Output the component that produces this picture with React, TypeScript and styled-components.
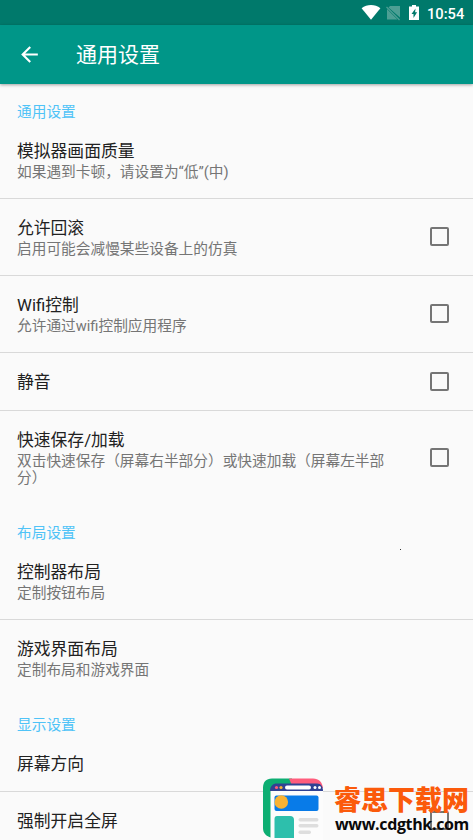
import React from 'react';
import styled, { createGlobalStyle } from 'styled-components';

const GlobalStyle = createGlobalStyle`
  html, body { margin: 0; padding: 0; background: #fafafa; }
  body { overflow: hidden; }
  * { box-sizing: border-box; }
`;

const Screen = styled.div`
  position: relative;
  width: 473px;
  height: 840px;
  overflow: hidden;
  background: #fafafa;
  font-family: Roboto, 'Noto Sans CJK SC', sans-serif;
`;

const StatusBar = styled.div`
  display: flex;
  align-items: center;
  justify-content: flex-end;
  height: 25px;
  padding-right: 9px;
  background: #00796b;
`;

const StatusIcons = styled.svg`
  display: block;
  width: 66px;
  height: 25px;
`;

const Clock = styled.span`
  width: 37px;
  color: #fff;
  font-size: 14.7px;
  font-weight: 500;
  line-height: 25px;
  white-space: nowrap;
  margin-top: 3px;
`;

const AppBar = styled.header`
  display: flex;
  align-items: center;
  height: 59px;
  padding-left: 17px;
  background: #009688;
  box-shadow: 0 1px 3px rgba(0, 0, 0, 0.36);
`;

const BackIcon = styled.svg`
  width: 25px;
  height: 25px;
`;

const Title = styled.h1`
  margin: 1px 0 0 34px;
  color: #fff;
  font-size: 21px;
  font-weight: 400;
  line-height: 30px;
`;

const Category = styled.h2`
  margin: 0;
  height: 38px;
  padding: 18px 17px 0;
  color: #4fc3f7;
  font-size: 14.7px;
  font-weight: 400;
  line-height: 20px;
`;

const Row = styled.div<{ $height: number; $divided: boolean }>`
  display: flex;
  align-items: center;
  height: ${p => p.$height}px;
  padding: 0 24px 0 17px;
  border-bottom: 1px solid ${p => (p.$divided ? '#d9d9d9' : 'transparent')};
`;

const RowText = styled.div`
  flex: 1;
  padding-right: 27px;
`;

const Label = styled.div`
  color: #212121;
  font-size: 16.8px;
  line-height: 22px;

  &:only-child {
    padding-top: 1px;
  }
`;

const Summary = styled.div`
  color: #757575;
  font-size: 14.7px;
  line-height: 17px;
  padding-top: 2px;
`;

const Checkbox = styled.span`
  flex: none;
  width: 19px;
  height: 19px;
  margin-bottom: 1px;
  border: 2px solid #757575;
  border-radius: 2px;
`;

const Speck = styled.span`
  position: absolute;
  left: 400px;
  top: 549px;
  width: 1px;
  height: 1px;
  background: #333;
`;

const Watermark = styled.div`
  position: absolute;
  left: 262px;
  top: 777px;
  display: flex;
`;

const Logo = styled.svg`
  width: 62px;
  height: 63px;
`;

const Brand = styled.div`
  margin-left: 10px;
  white-space: nowrap;
`;

const BrandName = styled.div`
  color: #fb5a0b;
  font: 900 27px/34px 'Noto Sans CJK SC', sans-serif;
  padding-top: 5px;
`;

const BrandUrl = styled.div`
  color: #0a0a0a;
  font: 700 16px/17px 'Open Sans', sans-serif;
  letter-spacing: -0.35px;
  padding-left: 1px;
`;

type Item = { label: string; summary?: string; check?: boolean; height: number };
type Section = { name: string; items: Item[] };

const sections: Section[] = [
  {
    name: '通用设置',
    items: [
      { label: '模拟器画面质量', summary: '如果遇到卡顿，请设置为“低”(中)', height: 77 },
      { label: '允许回滚', summary: '启用可能会减慢某些设备上的仿真', check: true, height: 77 },
      { label: 'Wifi控制', summary: '允许通过wifi控制应用程序', check: true, height: 77 },
      { label: '静音', check: true, height: 58 },
      {
        label: '快速保存/加载',
        summary: '双击快速保存（屏幕右半部分）或快速加载（屏幕左半部分）',
        check: true,
        height: 94,
      },
    ],
  },
  {
    name: '布局设置',
    items: [
      { label: '控制器布局', summary: '定制按钮布局', height: 77 },
      { label: '游戏界面布局', summary: '定制布局和游戏界面', height: 77 },
    ],
  },
  {
    name: '显示设置',
    items: [
      { label: '屏幕方向', height: 57 },
      { label: '强制开启全屏', check: true, height: 58 },
    ],
  },
];

export default function App() {
  return (
    <Screen>
      <GlobalStyle />
      <StatusBar>
        <StatusIcons viewBox="0 0 66 25">
          <path d="M.6 8.400C6 4.200 14 4.200 19.400 8.400L10 20Z" fill="#fff" transform="translate(0 -.2)" />
          <path d="M29 6h10v11.500L27.500 7.500ZM26 9l10.500 10.500H26Z" fill="#4d9f94" />
          <path d="m25.500 7 13 13" stroke="#4d9f94" strokeWidth="1.300" />
          <path d="M51 5h4v1.500h3V20H48V6.500h3Z" fill="#fff" />
          <path d="m54.500 8.500-4 5.500h2v4l3.600-5.700h-2Z" fill="#00796b" />
        </StatusIcons>
        <Clock>10:54</Clock>
      </StatusBar>
      <AppBar>
        <BackIcon viewBox="0 0 24 24">
          <path fill="#fff" d="M20 11H7.830l5.590-5.590L12 4l-8 8 8 8 1.410-1.410L7.830 13H20v-2z" />
        </BackIcon>
        <Title>通用设置</Title>
      </AppBar>
      <main>
        {sections.map(section => (
          <section key={section.name}>
            <Category>{section.name}</Category>
            {section.items.map((item, i) => (
              <Row key={item.label} $height={item.height} $divided={i < section.items.length - 1}>
                <RowText>
                  <Label>{item.label}</Label>
                  {item.summary && <Summary>{item.summary}</Summary>}
                </RowText>
                {item.check && <Checkbox />}
              </Row>
            ))}
          </section>
        ))}
      </main>
      <Speck />
      <Watermark>
        <Logo viewBox="0 0 62 63">
          <path d="M8 13H61V63H8Z" fill="#fcfcfc" />
          <path d="M10 1.500H30V14H8.500V60.500C4 59 1 56 1 51V11C1 5 4 1.500 10 1.500Z" fill="#0dae72" />
          <path d="M27 1.500H51C57 1.500 60 5 61 11H31Z" fill="#ff5c7c" />
          <path d="M8 14C8 9 11 6.500 15 6.500H55C59 6.500 61 10 61 14Z" fill="#304293" />
          <circle cx="14.500" cy="10.500" r="1.600" fill="#ff5c7c" />
          <circle cx="19" cy="10.500" r="1.600" fill="#f9b233" />
          <rect x="23" y="8.500" width="26" height="4" rx="2" fill="#fff" />
          <circle cx="53" cy="10.500" r="1.500" fill="#fff" />
          <circle cx="57.500" cy="10.500" r="1.500" fill="#fff" />
          <rect x="12.500" y="18.500" width="44" height="15.500" rx="2" fill="#087be8" />
          <circle cx="19.300" cy="25" r="6.800" fill="#f9b233" />
          <path d="M15 39H28q4 0 4 4V61H12.500V42q0-3 2.500-3Z" fill="#2dbfac" />
          <g fill="#dedede">
            <rect x="36.500" y="41" width="20" height="3.500" rx="1.700" />
            <rect x="36.500" y="47" width="20" height="3.500" rx="1.700" />
            <rect x="36.500" y="53.500" width="12.500" height="3.500" rx="1.700" />
          </g>
        </Logo>
        <Brand>
          <BrandName>睿思下载网</BrandName>
          <BrandUrl>www.cdgthk.com</BrandUrl>
        </Brand>
      </Watermark>
    </Screen>
  );
}
